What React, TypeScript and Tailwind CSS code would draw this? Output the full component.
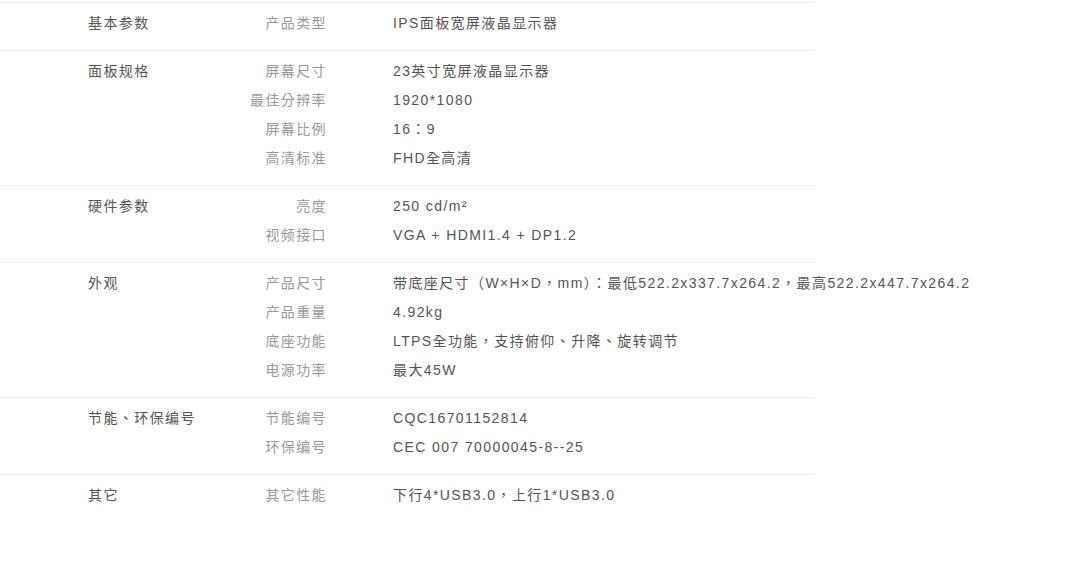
const groups: { title: string; rows: [string, string][] }[] = [
  { title: "基本参数", rows: [["产品类型", "IPS面板宽屏液晶显示器"]] },
  {
    title: "面板规格",
    rows: [
      ["屏幕尺寸", "23英寸宽屏液晶显示器"],
      ["最佳分辨率", "1920*1080"],
      ["屏幕比例", "16：9"],
      ["高清标准", "FHD全高清"],
    ],
  },
  {
    title: "硬件参数",
    rows: [
      ["亮度", "250 cd/m²"],
      ["视频接口", "VGA + HDMI1.4 + DP1.2"],
    ],
  },
  {
    title: "外观",
    rows: [
      ["产品尺寸", "带底座尺寸（W×H×D，mm）：最低522.2x337.7x264.2，最高522.2x447.7x264.2"],
      ["产品重量", "4.92kg"],
      ["底座功能", "LTPS全功能，支持俯仰、升降、旋转调节"],
      ["电源功率", "最大45W"],
    ],
  },
  {
    title: "节能、环保编号",
    rows: [
      ["节能编号", "CQC16701152814"],
      ["环保编号", "CEC 007 70000045-8--25"],
    ],
  },
  { title: "其它", rows: [["其它性能", "下行4*USB3.0，上行1*USB3.0"]] },
];

export default function App() {
  return (
    <div
      className="w-[1089px] h-[571px] bg-white pt-[2px] text-[14px] tracking-[1.4px]"
      style={{ fontFamily: '"Liberation Sans", "Noto Sans CJK TC", sans-serif' }}
    >
      <div className="w-[814px]">
        {groups.map((g) => (
          <div key={g.title} className="flex border-t border-[#eeeeee] pt-[6px] pb-[12px]">
            <div className="w-[248px] shrink-0 pl-[88px] leading-[29px] whitespace-nowrap text-[#555]">
              {g.title}
            </div>
            <div className="flex flex-col">
              {g.rows.map(([k, v]) => (
                <div key={k} className="flex leading-[29px]">
                  <div className="w-[79px] shrink-0 text-right whitespace-nowrap text-[#999]">{k}</div>
                  <div className="ml-[66px] whitespace-nowrap text-[#555]">{v}</div>
                </div>
              ))}
            </div>
          </div>
        ))}
      </div>
    </div>
  );
}
